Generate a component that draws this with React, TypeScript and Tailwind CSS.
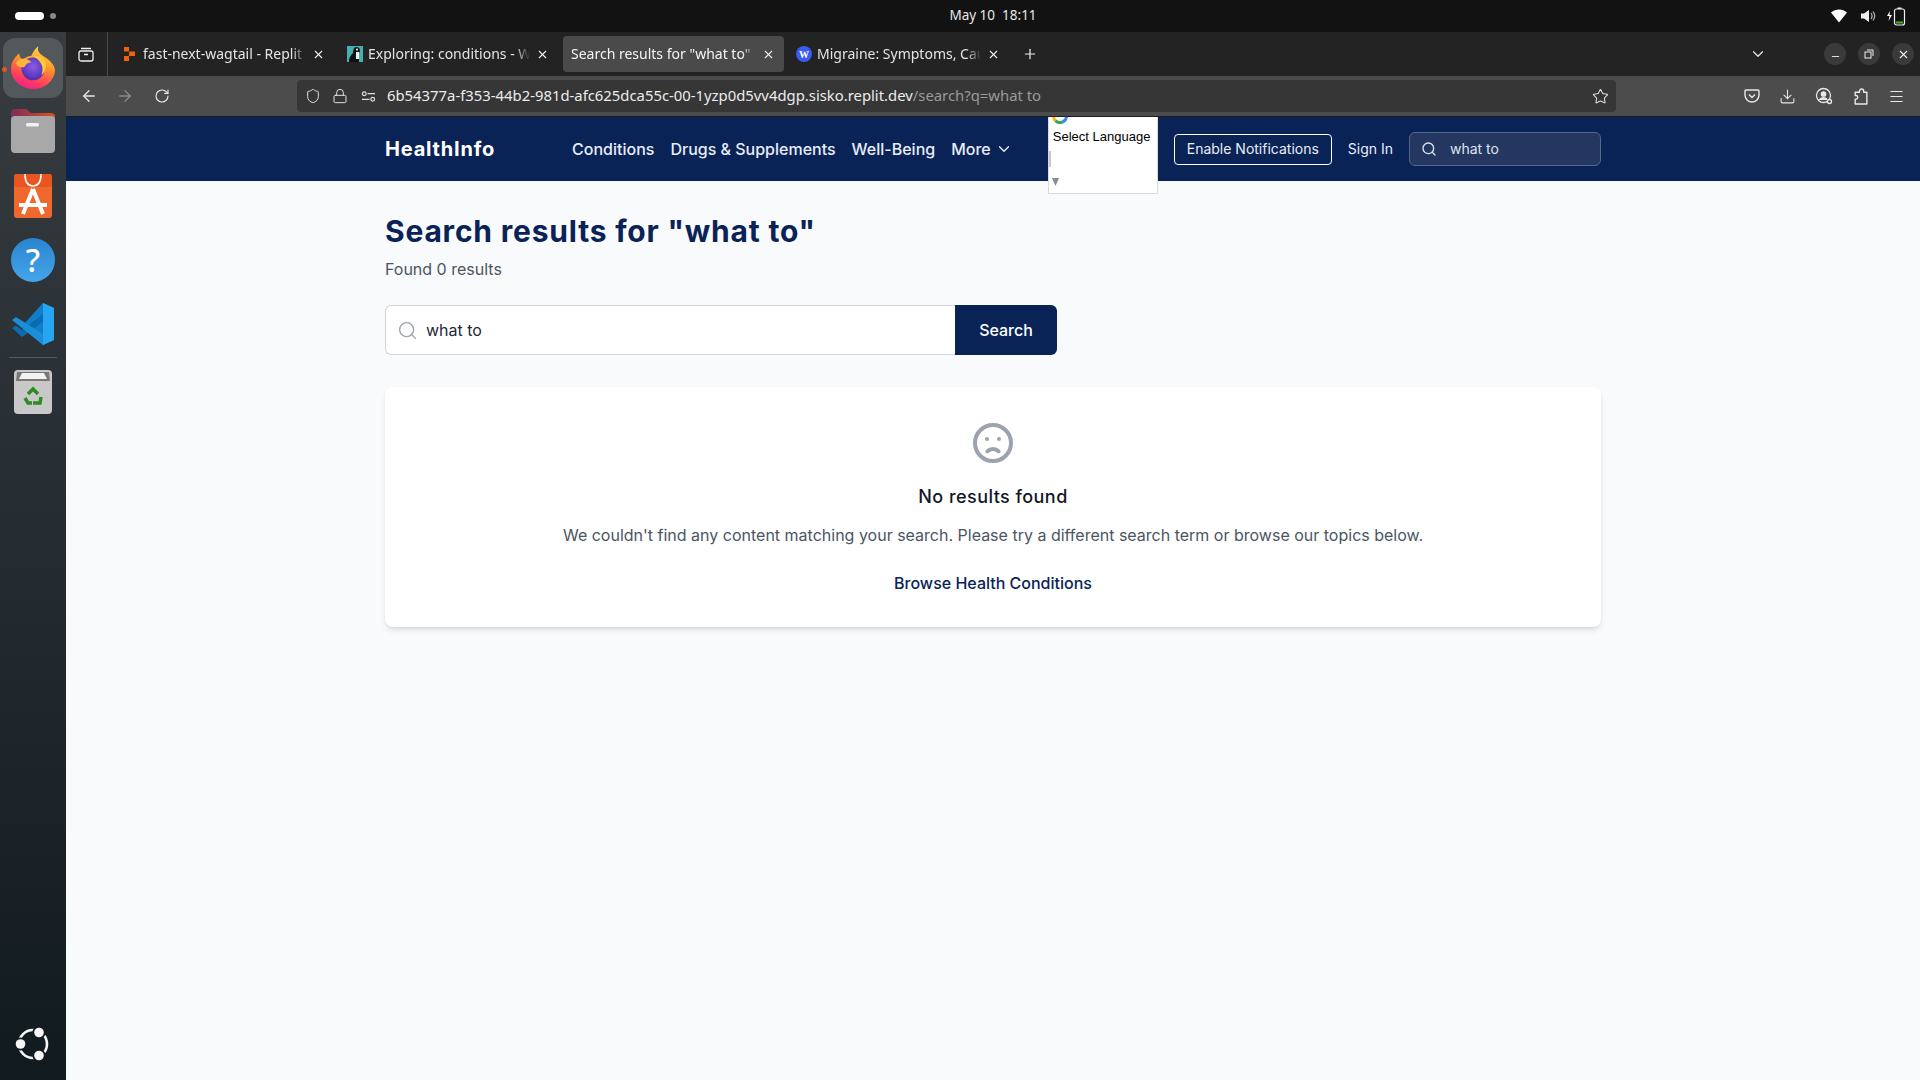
import React from 'react';
import {
  ArrowLeft,
  ArrowRight,
  RotateCw,
  Shield,
  Lock,
  Star,
  Download,
  Menu,
  X,
  Plus,
  ChevronDown,
  Search,
  Minus,
} from 'lucide-react';

const FirefoxLogo = () => (
  <svg viewBox="0 0 48 48" className="w-11 h-11">
    <defs>
      <linearGradient id="ff1" x1="0.75" y1="0" x2="0.35" y2="1">
        <stop offset="0" stopColor="#ffe34a" />
        <stop offset="0.4" stopColor="#ff9a26" />
        <stop offset="0.8" stopColor="#ff3a5e" />
        <stop offset="1" stopColor="#f0218a" />
      </linearGradient>
      <radialGradient id="ff2" cx="0.5" cy="0.4" r="0.6">
        <stop offset="0" stopColor="#8f5ae8" />
        <stop offset="1" stopColor="#4a2fb0" />
      </radialGradient>
    </defs>
    <path d="M30 1C28 6 31 9 35 12C42 16 48 22 48 28C47 39 37 48 24 48C11 48 0 38 0 26C0 20 3 15 6 12L9 9C9 13 11 15 13 16C15 14 18 12 22 12C24 8 26 4 30 1z" fill="url(#ff1)" />
    <circle cx="24" cy="26" r="12.500" fill="url(#ff2)" />
    <path d="M5 20c3-4 7-6 11-5 3 1 5 2 6 4-3 0-5 1-6 3-1 2-2 3-5 2-3 0-5-2-6-4z" fill="#ffb340" />
    <path d="M24 12c6-1 12 2 14 8 1 5-1 10-5 13 2-5 2-10-1-14-2-3-5-5-8-7z" fill="#ffc83a" />
  </svg>
);

const FilesIcon = () => (
  <svg viewBox="0 0 46 46" className="w-[46px] h-[46px]">
    <defs>
      <linearGradient id="fold" x1="0" y1="0" x2="1" y2="0">
        <stop offset="0" stopColor="#7b2b5e" />
        <stop offset="1" stopColor="#d9541e" />
      </linearGradient>
    </defs>
    <path d="M1 4a4 4 0 0 1 4-4h11l5 4h20a4 4 0 0 1 4 4v12H1z" fill="url(#fold)" />
    <rect x="1" y="7" width="44" height="37" rx="4" fill="#a8a8a8" />
    <rect x="16" y="14" width="13" height="3.500" rx="1.500" fill="#f2f2f2" />
  </svg>
);

const StoreIcon = () => (
  <svg viewBox="0 0 38 46" className="w-[38px] h-[46px]">
    <rect x="0" y="1" width="38" height="44" rx="3" fill="#f0682d" />
    <rect x="0" y="1" width="38" height="13" rx="3" fill="#e95420" />
    <path d="M11 1c0 8 3 12 8 12s8-4 8-12" fill="none" stroke="#fff" strokeWidth="1.600" />
    <path d="M19 16 9 41M19 16l10 25M5 32h28" fill="none" stroke="#fff" strokeWidth="4" />
  </svg>
);

const VsCodeIcon = () => (
  <svg viewBox="0 0 44 44" className="w-[44px] h-[44px]">
    <path d="M32 1 13 22l19 21 11-5V6z" fill="#0f7fcc" />
    <path d="M32 1v42l11-5V6z" fill="#25a5f2" />
    <path d="M32 12 11 28l-6-4.500L1 26l10 9L32 20z" fill="#0a6cb0" />
    <path d="M1 18 5 15l27 17v11L1 18z" fill="#1a8fd8" />
  </svg>
);

const TrashIcon = () => (
  <svg viewBox="0 0 38 46" className="w-[38px] h-[46px]">
    <rect x="0" y="1" width="38" height="44" rx="4" fill="#c8c8c8" />
    <path d="M3 3h32l1 9H2z" fill="#777" />
    <path d="M5 10 8 4h22l3 6z" fill="#f2f2f2" />
    <g fill="none" stroke="#2e8b22" strokeWidth="3.500">
      <path d="M14 25l5-5 5 5" />
      <path d="M27 28l-1 6h-7" />
      <path d="M11 29l3 5h4" />
    </g>
  </svg>
);

const UbuntuLogo = () => (
  <svg viewBox="0 0 36 36" className="w-9 h-9">
    <circle cx="18" cy="18" r="14" fill="none" stroke="#f5f5f5" strokeWidth="2.600" />
    <circle cx="5.500" cy="18" r="6.600" fill="#131c20" />
    <circle cx="24" cy="6.500" r="6.600" fill="#131c20" />
    <circle cx="24" cy="29.500" r="6.600" fill="#131c20" />
    <circle cx="5.500" cy="18" r="4.800" fill="#f5f5f5" />
    <circle cx="24" cy="6.500" r="4.800" fill="#f5f5f5" />
    <circle cx="24" cy="29.500" r="4.800" fill="#f5f5f5" />
  </svg>
);

const Dock = () => (
  <aside className="w-[66px] shrink-0 flex flex-col items-center pt-[6px] pb-[6px] gap-1 bg-gradient-to-b from-[#363c40] via-[#252c31] to-[#111a1e]">
    <div className="relative w-[60px] h-[60px] rounded-xl bg-[#53585b] flex items-center justify-center pb-[2px]">
      <span className="absolute left-[-1px] top-[29px] w-[5px] h-[5px] rounded-full bg-[#e95420]" />
      <FirefoxLogo />
    </div>
    <div className="w-[60px] h-[60px] flex items-center justify-center"><FilesIcon /></div>
    <div className="w-[60px] h-[60px] flex items-center justify-center"><StoreIcon /></div>
    <div className="w-[60px] h-[60px] flex items-center justify-center">
      <div className="w-11 h-11 rounded-full bg-gradient-to-b from-[#2a85d0] to-[#45a5ea] flex items-center justify-center text-white text-[32px] font-medium font-['Noto_Sans']">?</div>
    </div>
    <div className="w-[60px] h-[60px] flex items-center justify-center"><VsCodeIcon /></div>
    <div className="w-12 h-px bg-[#555b5f] -mt-[1px]" />
    <div className="w-[60px] h-[60px] flex items-center justify-center"><TrashIcon /></div>
    <div className="mt-auto w-[60px] h-[60px] flex items-center justify-center"><UbuntuLogo /></div>
  </aside>
);

const SystemBar = () => (
  <header className="h-8 bg-[#121212] flex items-center text-[#e8e8e8] font-['Noto_Sans']">
    <div className="w-[66px] shrink-0 pl-[15px] flex items-center gap-[6px]">
      <span className="w-[29px] h-[8px] rounded-full bg-white" />
      <span className="w-[6px] h-[6px] rounded-full bg-[#8a8a8a]" />
    </div>
    <div className="flex-1 pl-[66px] text-center text-[13.500px] pb-[2px] whitespace-pre">May 10  18:11</div>
    <div className="w-[66px] shrink-0 pr-[14px] flex items-center justify-end">
      <svg viewBox="0 0 16 14" className="w-[16px] h-[14px] shrink-0 mr-[13px]"><path d="M0 3.500C4.500-.5 11.500-.5 16 3.500L8 13.500z" fill="#fff" /></svg>
      <svg viewBox="0 0 16 16" className="w-[16px] h-[16px] shrink-0 mr-[10px]">
        <path d="M1 5.500h3L9 2v12l-5-3.500H1z" fill="#eee" />
        <path d="M11 5c1.300 1.800 1.300 4.200 0 6M13 3.500c2 2.700 2 6.300 0 9" fill="none" stroke="#bbb" strokeWidth="1.200" />
      </svg>
      <svg viewBox="0 0 20 20" className="w-5 h-5 shrink-0">
        <path d="M4 5 1 10h2.500L2.500 15 6 9H3.500z" fill="#fff" />
        <rect x="8.500" y="3" width="10" height="16" rx="2" fill="none" stroke="#eee" strokeWidth="1.200" />
        <rect x="11.500" y="1.500" width="4" height="1.500" fill="#eee" />
        <rect x="10" y="15.500" width="7" height="2" fill="#4caf1a" />
      </svg>
    </div>
  </header>
);

type TabProps = {
  title: string;
  icon?: React.ReactNode;
  active?: boolean;
  className: string;
};

const Tab = ({ title, icon, active, className }: TabProps) => (
  <div className={`${className} h-9 shrink-0 flex items-center rounded-[4px] pl-2 gap-[6px] ${active ? 'bg-[#4a4a4a] text-[#f4f4f4]' : 'text-[#e4e4e4]'}`}>
    {icon}
    <span className="flex-1 min-w-0 overflow-hidden whitespace-nowrap text-[14px] pb-[1px] [mask-image:linear-gradient(to_left,transparent,black_14px)]">{title}</span>
    <X size={13} strokeWidth={2} className="shrink-0 text-[#eeeeee]" />
  </div>
);

const ReplitFavicon = () => (
  <svg viewBox="0 0 14 14" className="w-[14px] h-[14px] shrink-0">
    <path d="M1 0h5v4.500H1zM6 4.500h6v4.500H6zM1 9h5v5H1z" fill="#f26207" />
  </svg>
);

const WagtailFavicon = () => (
  <svg viewBox="0 0 16 16" className="w-4 h-4 shrink-0 -mr-[1px]">
    <rect width="16" height="16" fill="#43b1b0" />
    <path d="M9 1c3 0 4 2 4 4l-1 2v9H2c0-5 2-7 4-9 0-3 1-6 3-6z" fill="#111" />
    <circle cx="10" cy="3.500" r="1" fill="#fff" />
    <path d="M9 6l3 0v7H9z" fill="#eee" />
  </svg>
);

const WikiFavicon = () => (
  <span className="w-4 h-4 shrink-0 -mr-[1px] rounded-full bg-[#3a5cf0] text-white text-[10px] font-bold flex items-center justify-center font-['Liberation_Serif']">W</span>
);

const TabBar = () => (
  <div className="h-11 bg-[#232323] flex items-center">
    <div className="w-[42px] h-full shrink-0 flex items-center justify-center pr-[2px] border-r border-[#4a4a4a]">
      <svg viewBox="0 0 16 16" className="w-4 h-4" fill="none" stroke="#f0f0f0" strokeWidth="1.300">
        <rect x="1" y="5" width="14" height="10" rx="2" />
        <path d="M3 2.500h10M6 8.500h4" />
      </svg>
    </div>
    <div className="flex items-center pl-[7px] font-['Noto_Sans']">
      <Tab className="w-[224px] pr-[14px]" title="fast-next-wagtail - Replit" icon={<ReplitFavicon />} />
      <Tab className="w-[224px] pr-[14px]" title="Exploring: conditions - Wagtail" icon={<WagtailFavicon />} />
      <Tab className="w-[221px] pr-[9px]" active title={'Search results for "what to" - HealthInfo'} />
      <Tab className="w-[222px] ml-[4px] pr-[10px]" title="Migraine: Symptoms, Causes" icon={<WikiFavicon />} />
      <Plus size={16} strokeWidth={1.800} className="ml-[12px] text-[#eeeeee]" />
    </div>
    <ChevronDown size={18} strokeWidth={1.600} className="ml-auto mr-[57px] text-[#e8e8e8]" />
    <div className="flex items-center gap-[12px] pr-[6px]">
      <span className="w-[22px] h-[22px] rounded-full bg-[#3a3a3a] flex items-center justify-center"><Minus size={11} className="text-[#eeeeee] mt-1" /></span>
      <span className="w-[22px] h-[22px] rounded-full bg-[#3a3a3a] flex items-center justify-center">
        <svg viewBox="0 0 10 10" className="w-[10px] h-[10px]" fill="none" stroke="#eee" strokeWidth="1"><rect x="1" y="3" width="6" height="6" /><path d="M3 1h6v6" /></svg>
      </span>
      <span className="w-[22px] h-[22px] rounded-full bg-[#3a3a3a] flex items-center justify-center"><X size={13} className="text-[#eeeeee]" /></span>
    </div>
  </div>
);

const Toolbar = () => (
  <div className="h-[41px] bg-[#4c4c4c] border-b border-[#1c1c1c] flex items-center text-[#e8e8e8]">
    <div className="w-[231px] shrink-0 flex items-center pl-[14px] gap-[18px]">
      <ArrowLeft size={18} strokeWidth={1.700} />
      <ArrowRight size={18} strokeWidth={1.700} className="text-[#8c8c8c]" />
      <RotateCw size={16} strokeWidth={1.700} className="ml-[2px]" />
    </div>
    <div className="w-[1319px] h-8 shrink-0 rounded-[4px] bg-[#363636] flex items-center pl-[8px] pr-[7px] text-[#e0e0e0]">
      <Shield size={16} strokeWidth={1.500} />
      <Lock size={16} strokeWidth={1.500} className="ml-[11px]" />
      <svg viewBox="0 0 16 16" className="w-[15px] h-[15px] ml-[13px]" fill="none" stroke="#e0e0e0" strokeWidth="1.300">
        <path d="M7 5h8M1 11h8" /><circle cx="3.500" cy="5" r="2" /><circle cx="12.500" cy="11" r="2" />
      </svg>
      <span className="ml-[11px] pb-[1px] text-[14.850px] whitespace-pre font-['Noto_Sans'] text-[#ececec]">
        6b54377a-f353-44b2-981d-afc625dca55c-00-1yzp0d5vv4dgp.sisko.replit.dev<span className="text-[#9a9a9a]">/search?q=what to</span>
      </span>
      <Star size={17} strokeWidth={1.500} className="ml-auto" />
    </div>
    <div className="flex-1 flex items-center justify-between pl-[128px] pr-[15px]">
      <svg viewBox="0 0 16 16" className="w-4 h-4" fill="none" stroke="#e8e8e8" strokeWidth="1.400">
        <path d="M2 2h12a1 1 0 0 1 1 1v4a7 7 0 0 1-14 0V3a1 1 0 0 1 1-1z" /><path d="M5 6.500 8 9.500l3-3" />
      </svg>
      <Download size={17} strokeWidth={1.500} />
      <svg viewBox="0 0 18 18" className="w-[18px] h-[18px]" fill="none" stroke="#e8e8e8" strokeWidth="1.300">
        <circle cx="8.500" cy="8.500" r="7" /><circle cx="8.500" cy="7" r="2.200" fill="#e8e8e8" /><path d="M4 13c2-3 7-3 8 0" fill="#e8e8e8" /><circle cx="14.500" cy="14.500" r="2" fill="#4c4c4c" />
      </svg>
      <svg viewBox="0 0 16 16" className="w-[17px] h-[17px]" fill="none" stroke="#e8e8e8" strokeWidth="1.300" strokeLinejoin="round">
        <path d="M3 15V10.500h1a1.800 1.800 0 0 0 0-3.500H3V4h4V3a2 2 0 0 1 4 0v1h3v11z" />
      </svg>
      <Menu size={17} strokeWidth={1.500} />
    </div>
  </div>
);

const SiteNav = () => (
  <nav className="h-16 bg-[#0a2357] text-white font-['Inter']">
    <div className="max-w-7xl mx-auto px-8 h-full flex items-center justify-between">
      <div className="flex items-center">
        <span className="text-xl font-bold tracking-[0.8px] mr-[77px]">HealthInfo</span>
        <div className="flex items-center gap-4 text-base font-medium text-[#e8edf6]">
          <a>Conditions</a>
          <a>Drugs &amp; Supplements</a>
          <a>Well-Being</a>
          <a className="flex items-center gap-1">More <ChevronDown size={18} strokeWidth={1.800} /></a>
        </div>
      </div>
      <div className="flex items-center gap-4 h-full">
        <div className="relative z-10 w-[110px] h-[77px] self-start bg-white border border-t-0 border-[#d8dbe0] text-black overflow-hidden flex flex-col font-['Liberation_Sans'] text-[13px] pl-1">
          <svg viewBox="0 0 16 16" className="w-4 h-4 -ml-[1px] -mt-[9px] shrink-0" fill="none" strokeWidth="3">
            <path d="M1.500 8a6.500 6.500 0 0 0 1.900 4.600" stroke="#fbbc05" />
            <path d="M3.400 12.600A6.500 6.500 0 0 0 10 14.200" stroke="#34a853" />
            <path d="M10 14.200A6.500 6.500 0 0 0 14.500 8" stroke="#4285f4" />
          </svg>
          <span className="mt-[5px] whitespace-nowrap leading-[15px]">Select Language</span>
          <span className="mt-[7px] -ml-[4px] w-[2px] h-4 bg-[#c8c8c8] shrink-0" />
          <svg viewBox="0 0 7 8" className="w-[7px] h-2 -ml-[1px] mt-[11px] shrink-0"><path d="M0 0h7L3.500 8z" fill="#8a8a8a" /></svg>
        </div>
        <button className="h-[31px] w-[158px] rounded-[4px] border border-white text-sm text-[#e8edf6]">Enable Notifications</button>
        <a className="text-sm text-[#e8edf6]">Sign In</a>
        <div className="w-[192px] h-[34px] rounded-md bg-[#243761] border border-[#56678c] flex items-center pl-[11px] gap-[13px] text-sm text-[#dfe5f0]">
          <Search size={16} className="shrink-0" />
          <span>what to</span>
        </div>
      </div>
    </div>
  </nav>
);

const SearchResults = () => (
  <main className="flex-1 bg-[#f9fafb] font-['Inter']">
    <div className="max-w-7xl mx-auto px-8 py-8">
      <h1 className="text-3xl font-bold tracking-[0.8px] text-[#0a2357] mb-2">Search results for "what to"</h1>
      <p className="text-base text-[#4b5563] mb-6">Found 0 results</p>

      <form className="flex max-w-2xl h-[50px] mb-8" onSubmit={(e) => e.preventDefault()}>
        <div className="flex-1 flex items-center bg-white border border-[#d1d5db] border-r-0 rounded-l-md pl-[11px] gap-[8px]">
          <Search size={21} strokeWidth={1.600} className="text-[#9ca3af] shrink-0" />
          <input readOnly value="what to" className="flex-1 outline-none text-base text-[#1f2937] bg-transparent" />
        </div>
        <button className="w-[102px] bg-[#0a2357] text-white text-base font-medium rounded-r-md">Search</button>
      </form>

      <div className="bg-white rounded-lg shadow-md p-8 text-center">
        <svg viewBox="0 0 24 24" className="w-12 h-12 mx-auto mb-4 text-[#9ca3af]" fill="none" stroke="currentColor" strokeWidth="2" strokeLinecap="round" strokeLinejoin="round">
          <path d="M9.172 16.172a4 4 0 015.656 0M9 10h.01M15 10h.01M21 12a9 9 0 11-18 0 9 9 0 0118 0z" />
        </svg>
        <h3 className="text-lg font-medium tracking-[0.45px] text-[#111827] mb-3">No results found</h3>
        <p className="text-base text-[#4b5563] mb-6">We couldn't find any content matching your search. Please try a different search term or browse our topics below.</p>
        <a className="text-base font-medium text-[#0a2357]">Browse Health Conditions</a>
      </div>
    </div>
  </main>
);

export default function App() {
  return (
    <div className="w-[1920px] h-[1080px] flex flex-col overflow-hidden">
      <SystemBar />
      <div className="flex-1 min-h-0 flex">
        <Dock />
        <div className="flex-1 min-w-0 flex flex-col">
          <TabBar />
          <Toolbar />
          <SiteNav />
          <SearchResults />
        </div>
      </div>
    </div>
  );
}
